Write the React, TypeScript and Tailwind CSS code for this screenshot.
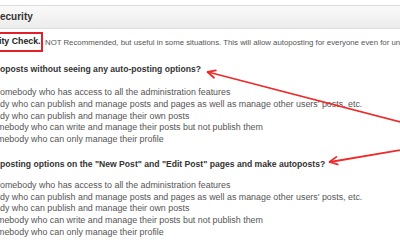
const roles = [
  { text: "omebody who has access to all the administration features", shift: "ml-0" },
  { text: "dy who can publish and manage posts and pages as well as manage other users' posts, etc.", shift: "ml-0" },
  { text: "dy who can publish and manage their own posts", shift: "ml-0" },
  { text: "mebody who can write and manage their posts but not publish them", shift: "-ml-[3px]" },
  { text: "mebody who can only manage their profile", shift: "-ml-[3px]" },
];

function RoleList({ className }: { className: string }) {
  return (
    <ul className={className}>
      {roles.map((r, i) => (
        <li key={i} className={`whitespace-nowrap text-[8.9px] leading-[11.75px] text-[#555] ${r.shift}`}>
          {r.text}
        </li>
      ))}
    </ul>
  );
}

function Arrows() {
  return (
    <svg className="pointer-events-none absolute inset-0" width="400" height="250" viewBox="0 0 400 250">
      <g stroke="#ee2a2a" strokeWidth="1.8" fill="none" strokeLinecap="round" strokeLinejoin="round">
        <line x1="208" y1="72" x2="412" y2="125" />
        <path d="M214 77.7 L207.5 72 L215.8 70.4" />
        <line x1="330" y1="162" x2="412" y2="148" />
        <path d="M337.7 164.4 L329.5 162 L336.4 156.9" />
      </g>
    </svg>
  );
}

export default function App() {
  return (
    <div className="relative h-[250px] w-[400px] overflow-hidden bg-white font-['Liberation_Sans',Arial,sans-serif]">
      <div className="pt-[5px]">
        <div className="flex h-[24px] items-center border-y border-[#dcdcdc] bg-gradient-to-b from-[#fafafa] to-[#ececec] pb-px">
          <span className="text-[10px] font-bold text-[#333]">ecurity</span>
        </div>
      </div>

      <div className="mt-[3px] flex items-center">
        <div className="flex h-[20px] w-[43px] shrink-0 items-center overflow-hidden border-y-2 border-r-2 border-[#e0202a]">
          <span className="-ml-[1px] whitespace-nowrap text-[8.8px] font-bold text-[#222]">ity Check.</span>
        </div>
        <span className="ml-[2px] mt-[2px] whitespace-nowrap text-[7.8px] text-[#555]">
          NOT Recommended, but useful in some situations. This will allow autoposting for everyone even for unregistered
        </span>
      </div>

      <p className="mt-[11px] whitespace-nowrap text-[8.6px] font-bold leading-[12px] text-[#333]">
        oposts without seeing any auto-posting options?
      </p>

      <RoleList className="mt-[12px]" />

      <p className="mt-[12px] whitespace-nowrap text-[8.6px] font-bold leading-[12px] text-[#333]">
        posting options on the "New Post" and "Edit Post" pages and make autoposts?
      </p>

      <RoleList className="mt-[10px]" />

      <Arrows />
    </div>
  );
}
